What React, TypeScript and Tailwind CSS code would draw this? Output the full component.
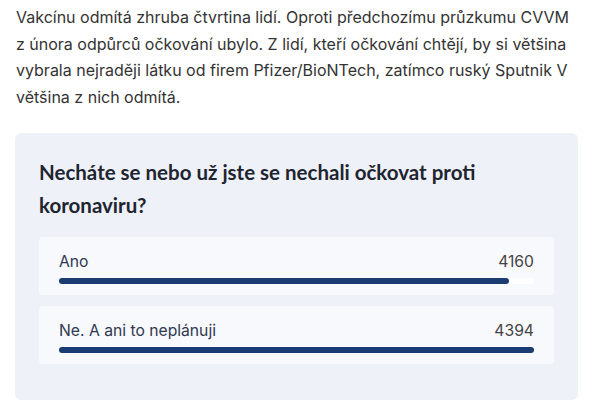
import React from "react";

const options = [
  { label: "Ano", votes: 4160 },
  { label: "Ne. A ani to neplánuji", votes: 4394 },
];

// Single poll answer with bar
const PollOption: React.FC<{ label: string; votes: number; max: number }> = ({
  label,
  votes,
  max,
}) => {
  return (
    <div className="rounded bg-[#f8f9fc] px-5 pt-[15px] pb-[11px]">
      <div className="flex items-center justify-between text-[15.7px] leading-[20px]">
        <span className="text-[#2d3850]">{label}</span>
        <span className="text-[#444]">{votes}</span>
      </div>
      <div className="mt-[6px] h-[6px] w-full rounded-full bg-white">
        <div
          className="h-[6px] rounded-full bg-[#1b3b73]"
          style={{ width: `${(votes / max) * 100}%` }}
        />
      </div>
    </div>
  );
};

export default function App() {
  const max = Math.max(...options.map((o) => o.votes));

  return (
    <div
      className="h-[413px] w-[600px] bg-white pl-[15px] pt-[4px]"
      style={{ fontFamily: "Inter, 'Liberation Sans', sans-serif" }}
    >
      <p className="w-[563px] pl-px text-[16px] leading-[26.7px] text-[#333]">
        Vakcínu odmítá zhruba čtvrtina lidí. Oproti předchozímu průzkumu CVVM
        z února odpůrců očkování ubylo. Z lidí, kteří očkování chtějí, by si
        většina vybrala nejraději látku od firem Pfizer/BioNTech, zatímco ruský
        Sputnik V většina z nich odmítá.
      </p>

      <div className="mt-[22px] w-[563px] rounded-md bg-[#eef1f7] px-6 pt-[23px] pb-[36px]">
        <h2 className="font-['Lato','Noto_Sans',sans-serif] text-[20.5px] font-bold leading-[33px] text-[#1e2530]">
          Necháte se nebo už jste se nechali očkovat proti koronaviru?
        </h2>
        <div className="mt-[15px] flex flex-col gap-[11px]">
          {options.map((o) => (
            <PollOption key={o.label} label={o.label} votes={o.votes} max={max} />
          ))}
        </div>
      </div>
    </div>
  );
}
